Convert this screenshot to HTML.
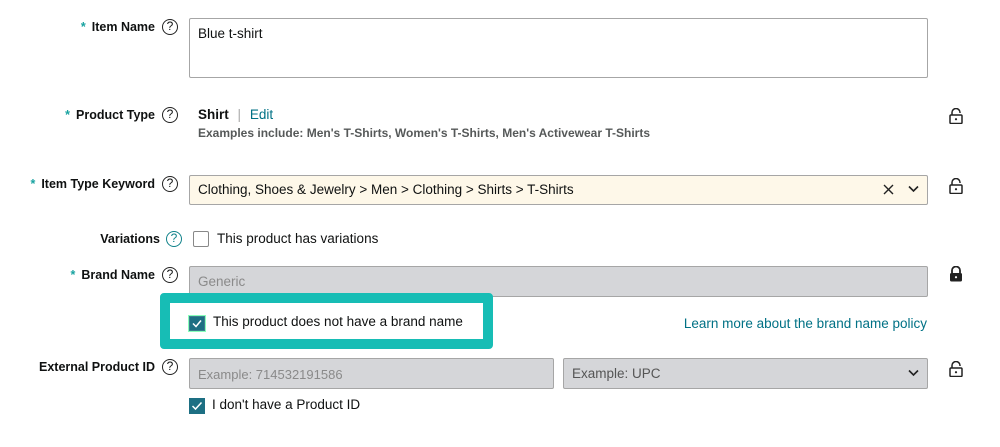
<!DOCTYPE html>
<html><head><meta charset="utf-8"><style>
*{box-sizing:border-box;margin:0;padding:0}
body{width:1000px;height:447px;background:#fff;font-family:"Liberation Sans",Arial,sans-serif;color:#0f1111;position:relative;overflow:hidden}
.a{position:absolute;white-space:nowrap}
.lbl{font-weight:bold;font-size:12.5px;text-align:right;right:845px;color:#0f1111}
.st{color:#17a2a0;margin-right:6px}
.q{position:absolute;width:16px;height:16px;border:1.4px solid #222;border-radius:50%;font-size:12px;text-align:center;line-height:13px}
.box{position:absolute;border:1px solid #a6a6a6;border-radius:2px}
.t{font-size:13.5px}
.lock{position:absolute;width:14px;height:16px}
</style></head><body>
<div class="a lbl" style="top:20px"><span class="st">*</span>Item Name</div>
<div class="q" style="left:162px;top:19px">?</div>
<div class="box" style="left:189px;top:18px;width:739px;height:60px"></div>
<div class="a t" style="left:198px;top:26px">Blue t-shirt</div>

<div class="a lbl" style="top:108px"><span class="st">*</span>Product Type</div>
<div class="q" style="left:162px;top:107px">?</div>
<div class="a t" style="left:198px;top:107px"><b>Shirt</b> <span style="color:#aaa;margin:0 5px">|</span> <span style="color:#007185">Edit</span></div>
<div class="a" style="left:198px;top:126px;font-size:12px;font-weight:bold;color:#565959">Examples include: Men's T-Shirts, Women's T-Shirts, Men's Activewear T-Shirts</div>

<div class="a lbl" style="top:177px"><span class="st">*</span>Item Type Keyword</div>
<div class="q" style="left:162px;top:176px">?</div>
<div class="box" style="left:189px;top:175px;width:739px;height:30px;background:#fef8e9"></div>
<div class="a t" style="left:198px;top:182px">Clothing, Shoes &amp; Jewelry &gt; Men &gt; Clothing &gt; Shirts &gt; T-Shirts</div>
<svg class="a" style="left:883px;top:184px" width="11" height="11"><path d="M1 1L10 10M10 1L1 10" stroke="#222" stroke-width="1.4"/></svg>
<svg class="a" style="left:908px;top:185px" width="11" height="8"><path d="M1 1.5L5.5 6L10 1.5" stroke="#222" stroke-width="1.6" fill="none"/></svg>

<div class="a lbl" style="top:232px;right:840px">Variations</div>
<div class="q" style="left:166px;top:231px;border-color:#10828a;color:#10828a">?</div>
<div class="box" style="left:193px;top:231px;width:16px;height:16px;border-color:#888"></div>
<div class="a t" style="left:217px;top:231px">This product has variations</div>

<div class="a lbl" style="top:268px"><span class="st">*</span>Brand Name</div>
<div class="q" style="left:162px;top:267px">?</div>
<div class="box" style="left:189px;top:266px;width:739px;height:31px;background:#d5d6d9"></div>
<div class="a t" style="left:198px;top:274px;color:#8a8a8a">Generic</div>

<div class="a" style="left:160px;top:293px;width:333px;height:56px;border:10px solid #17bdb5;border-radius:4px;background:#fff"></div>
<div class="a" style="left:188px;top:315px;width:18px;height:17px;background:#3c7f8e;border:1px solid #8fb"></div>
<svg class="a" style="left:190px;top:317px" width="14" height="13"><rect x="0" y="0" width="14" height="13" fill="#1d6f83"/><path d="M3 6.5L6 9.5L11 3.5" stroke="#fff" stroke-width="1.5" fill="none"/></svg>
<div class="a t" style="left:213px;top:314px">This product does not have a brand name</div>
<div class="a t" style="right:73px;top:316px;color:#007185">Learn more about the brand name policy</div>

<div class="a lbl" style="top:360px">External Product ID</div>
<div class="q" style="left:162px;top:359px">?</div>
<div class="box" style="left:189px;top:358px;width:365px;height:31px;background:#d5d6d9"></div>
<div class="a t" style="left:198px;top:367px;color:#8a8a8a;font-size:13px">Example: 714532191586</div>
<div class="box" style="left:563px;top:358px;width:365px;height:31px;background:#d5d6d9"></div>
<div class="a t" style="left:572px;top:366px;color:#555">Example: UPC</div>
<svg class="a" style="left:908px;top:369px" width="11" height="8"><path d="M1 1.5L5.5 6L10 1.5" stroke="#222" stroke-width="1.6" fill="none"/></svg>
<div class="a" style="left:189px;top:398px;width:16px;height:16px;background:#1d6f83"></div>
<svg class="a" style="left:189px;top:398px" width="16" height="16"><path d="M3.5 8L6.5 11L12.5 4.5" stroke="#fff" stroke-width="1.5" fill="none"/></svg>
<div class="a t" style="left:212px;top:397px">I don't have a Product ID</div>

<svg class="lock" style="left:949px;top:108px" viewBox="0 0 14 16"><path d="M3 7V4.5a4 4 0 0 1 8 0V5" fill="none" stroke="#222" stroke-width="1.5"/><rect x="1" y="7" width="12" height="8.5" rx="1" fill="none" stroke="#222" stroke-width="1.5"/><circle cx="7" cy="11.2" r="1.1" fill="#222"/></svg>
<svg class="lock" style="left:949px;top:178px" viewBox="0 0 14 16"><path d="M3 7V4.5a4 4 0 0 1 8 0V5" fill="none" stroke="#222" stroke-width="1.5"/><rect x="1" y="7" width="12" height="8.5" rx="1" fill="none" stroke="#222" stroke-width="1.5"/><circle cx="7" cy="11.2" r="1.1" fill="#222"/></svg>
<svg class="lock" style="left:949px;top:266px" viewBox="0 0 14 16"><path d="M3 7V4.5a4 4 0 0 1 8 0V7" fill="none" stroke="#222" stroke-width="1.8"/><rect x="1" y="7" width="12" height="8.5" rx="1.5" fill="#222"/><circle cx="7" cy="11.2" r="1.1" fill="#fff"/></svg>
<svg class="lock" style="left:949px;top:361px" viewBox="0 0 14 16"><path d="M3 7V4.5a4 4 0 0 1 8 0V5" fill="none" stroke="#222" stroke-width="1.5"/><rect x="1" y="7" width="12" height="8.5" rx="1" fill="none" stroke="#222" stroke-width="1.5"/><circle cx="7" cy="11.2" r="1.1" fill="#222"/></svg>
</body></html>
